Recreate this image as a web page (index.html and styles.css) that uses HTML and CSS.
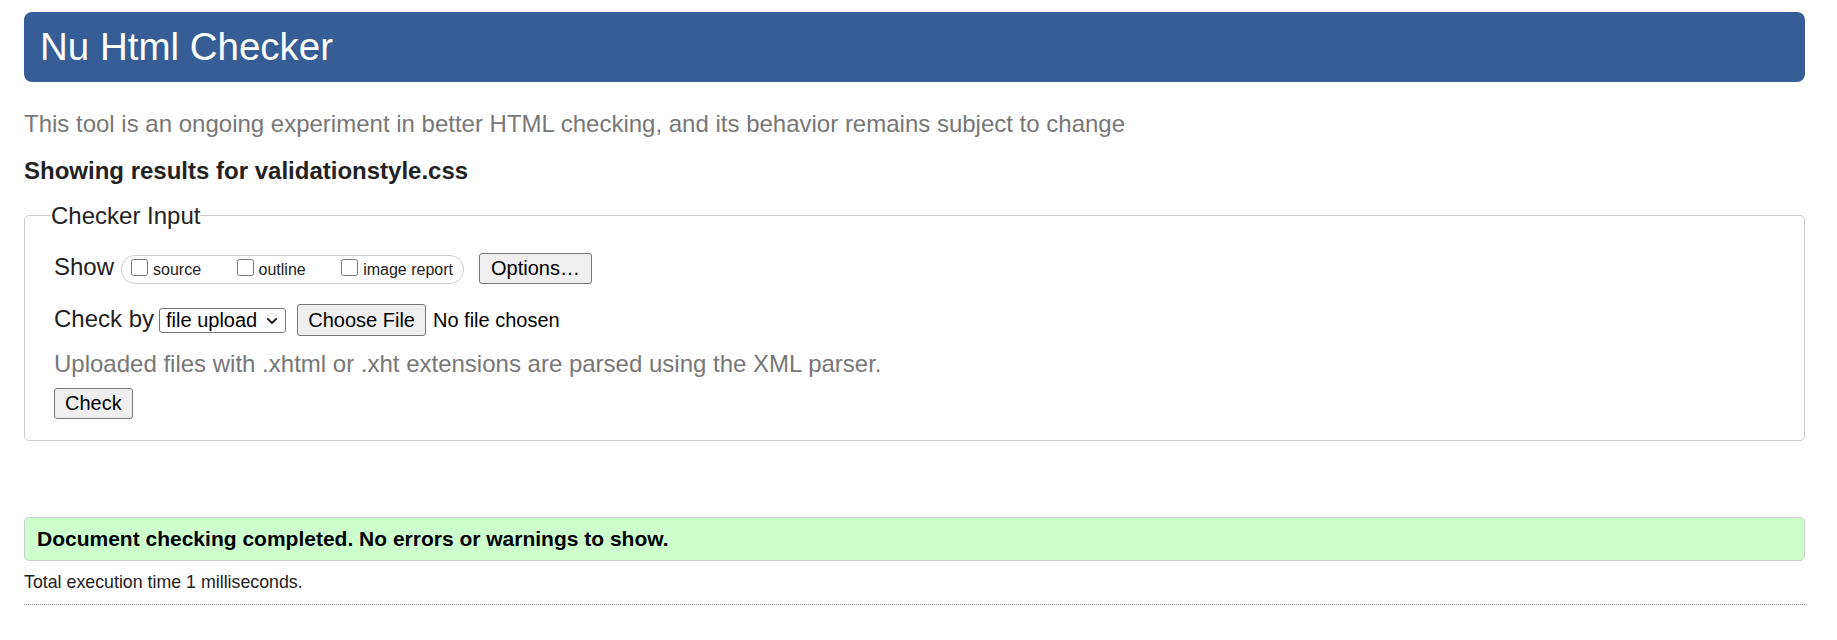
FILE: index.html
```html
<!DOCTYPE html>
<html lang="en">
<head>
<meta charset="utf-8">
<title>Showing results for validationstyle.css - Nu Html Checker</title>
<link rel="stylesheet" href="styles.css">
</head>
<body>
<h1 class="title">Nu Html Checker</h1>
<p class="intro">This tool is an ongoing experiment in better HTML checking, and its behavior remains subject to change</p>
<p class="showing">Showing results for validationstyle.css</p>
<form class="checker">
  <fieldset class="inputs">
    <legend class="legend">Checker Input</legend>
    <div class="row">
      <span class="label">Show</span>
      <span class="pill">
        <label class="opt"><input type="checkbox" class="cb">source</label>
        <label class="opt"><input type="checkbox" class="cb">outline</label>
        <label class="opt"><input type="checkbox" class="cb">image report</label>
      </span>
      <button type="button" class="btn options">Options…</button>
    </div>
    <div class="row row-check">
      <span class="label">Check by</span>
      <span class="select">
        <span class="select-text">file upload</span>
        <svg class="chevron" width="12" height="8" viewBox="0 0 12 8" aria-hidden="true"><path d="M1.2 1.4 L6 6 L10.8 1.4" fill="none" stroke="#111" stroke-width="1.8"/></svg>
      </span>
      <button type="button" class="btn file-btn">Choose File</button>
      <span class="file-name">No file chosen</span>
    </div>
    <p class="note">Uploaded files with .xhtml or .xht extensions are parsed using the XML parser.</p>
    <div class="row row-submit">
      <button type="button" class="btn">Check</button>
    </div>
  </fieldset>
</form>
<div class="results">
  <p class="success">Document checking completed. No errors or warnings to show.</p>
  <p class="stats">Total execution time 1 milliseconds.</p>
  <hr class="rule">
</div>
</body>
</html>
```

FILE: styles.css
```css
html, body {
  margin: 0;
  background: #fff;
}
body {
  padding: 0 32px 0 24px;
  font-family: "Liberation Sans", Arial, sans-serif;
  color: #222;
}
.title {
  margin: 12px 0 0;
  height: 70px;
  box-sizing: border-box;
  display: flex;
  align-items: center;
  padding: 0 16px;
  background: #365d95;
  color: #fff;
  font-size: 38.5px;
  font-weight: normal;
  border-radius: 8px;
}
.intro {
  margin: 28px 0 0;
  font-size: 24px;
  line-height: 27px;
  color: #777;
}
.showing {
  margin: 20px 0 0;
  font-size: 24px;
  line-height: 27px;
  font-weight: bold;
  color: #222;
}
.checker {
  margin: 18px 0 0;
}
.inputs {
  margin: 0;
  padding: 24px 29px 21px;
  border: 1px solid #ccc;
  border-radius: 5px;
  min-width: 0;
}
.legend {
  padding: 0;
  margin-left: -3px;
  font-size: 24px;
  line-height: 27px;
  color: #222;
}
.row {
  display: flex;
  align-items: baseline;
}
.label {
  font-size: 24px;
  line-height: 27px;
  color: #222;
}
.pill {
  display: inline-block;
  margin-left: 7px;
  padding: 2px 10px 3px 9px;
  border: 1px solid #ccc;
  border-radius: 14px;
  font-size: 16px;
  line-height: 20px;
  color: #222;
  white-space: nowrap;
}
.opt + .opt {
  margin-left: 31px;
}
.cb {
  width: 17px;
  height: 17px;
  margin: 0 5px 0 0;
  vertical-align: baseline;
  position: relative;
  top: 1px;
}
.btn {
  font-family: "Liberation Sans", Arial, sans-serif;
  font-size: 20px;
  line-height: 23px;
  padding: 3px 10px;
  border: 1px solid #767676;
  border-radius: 3px;
  background: #efefef;
  color: #000;
}
.options {
  margin-left: 15px;
  padding: 3px 11px;
}
.row-check {
  margin-top: 20px;
}
.select {
  display: inline-flex;
  align-items: center;
  margin-left: 5px;
  height: 25px;
  box-sizing: border-box;
  padding: 0 7px 0 6px;
  border: 1px solid #767676;
  border-radius: 3px;
  background: #fff;
  font-size: 20px;
  line-height: 23px;
  color: #000;
}
.chevron {
  margin-left: 9px;
}
.file-btn {
  margin-left: 11px;
  padding: 4px 10px 3px;
}
.file-name {
  margin-left: 7px;
  font-size: 20px;
  line-height: 23px;
  color: #000;
}
.note {
  margin: 14px 0 0;
  font-size: 24px;
  line-height: 27px;
  color: #777;
}
.row-submit {
  margin-top: 11px;
}
.results {
  margin-top: 76px;
}
.success {
  margin: 0;
  padding: 9px 12px;
  background: #cfc;
  border: 1px solid #ccc;
  border-radius: 5px;
  font-size: 21px;
  line-height: 24px;
  font-weight: bold;
  color: #000;
}
.stats {
  margin: 11px 0 0;
  font-size: 17.8px;
  line-height: 20px;
  color: #222;
}
.rule {
  margin: 12px 0 0;
  border: 0;
  border-top: 1px dotted #888;
  height: 0;
}
```
